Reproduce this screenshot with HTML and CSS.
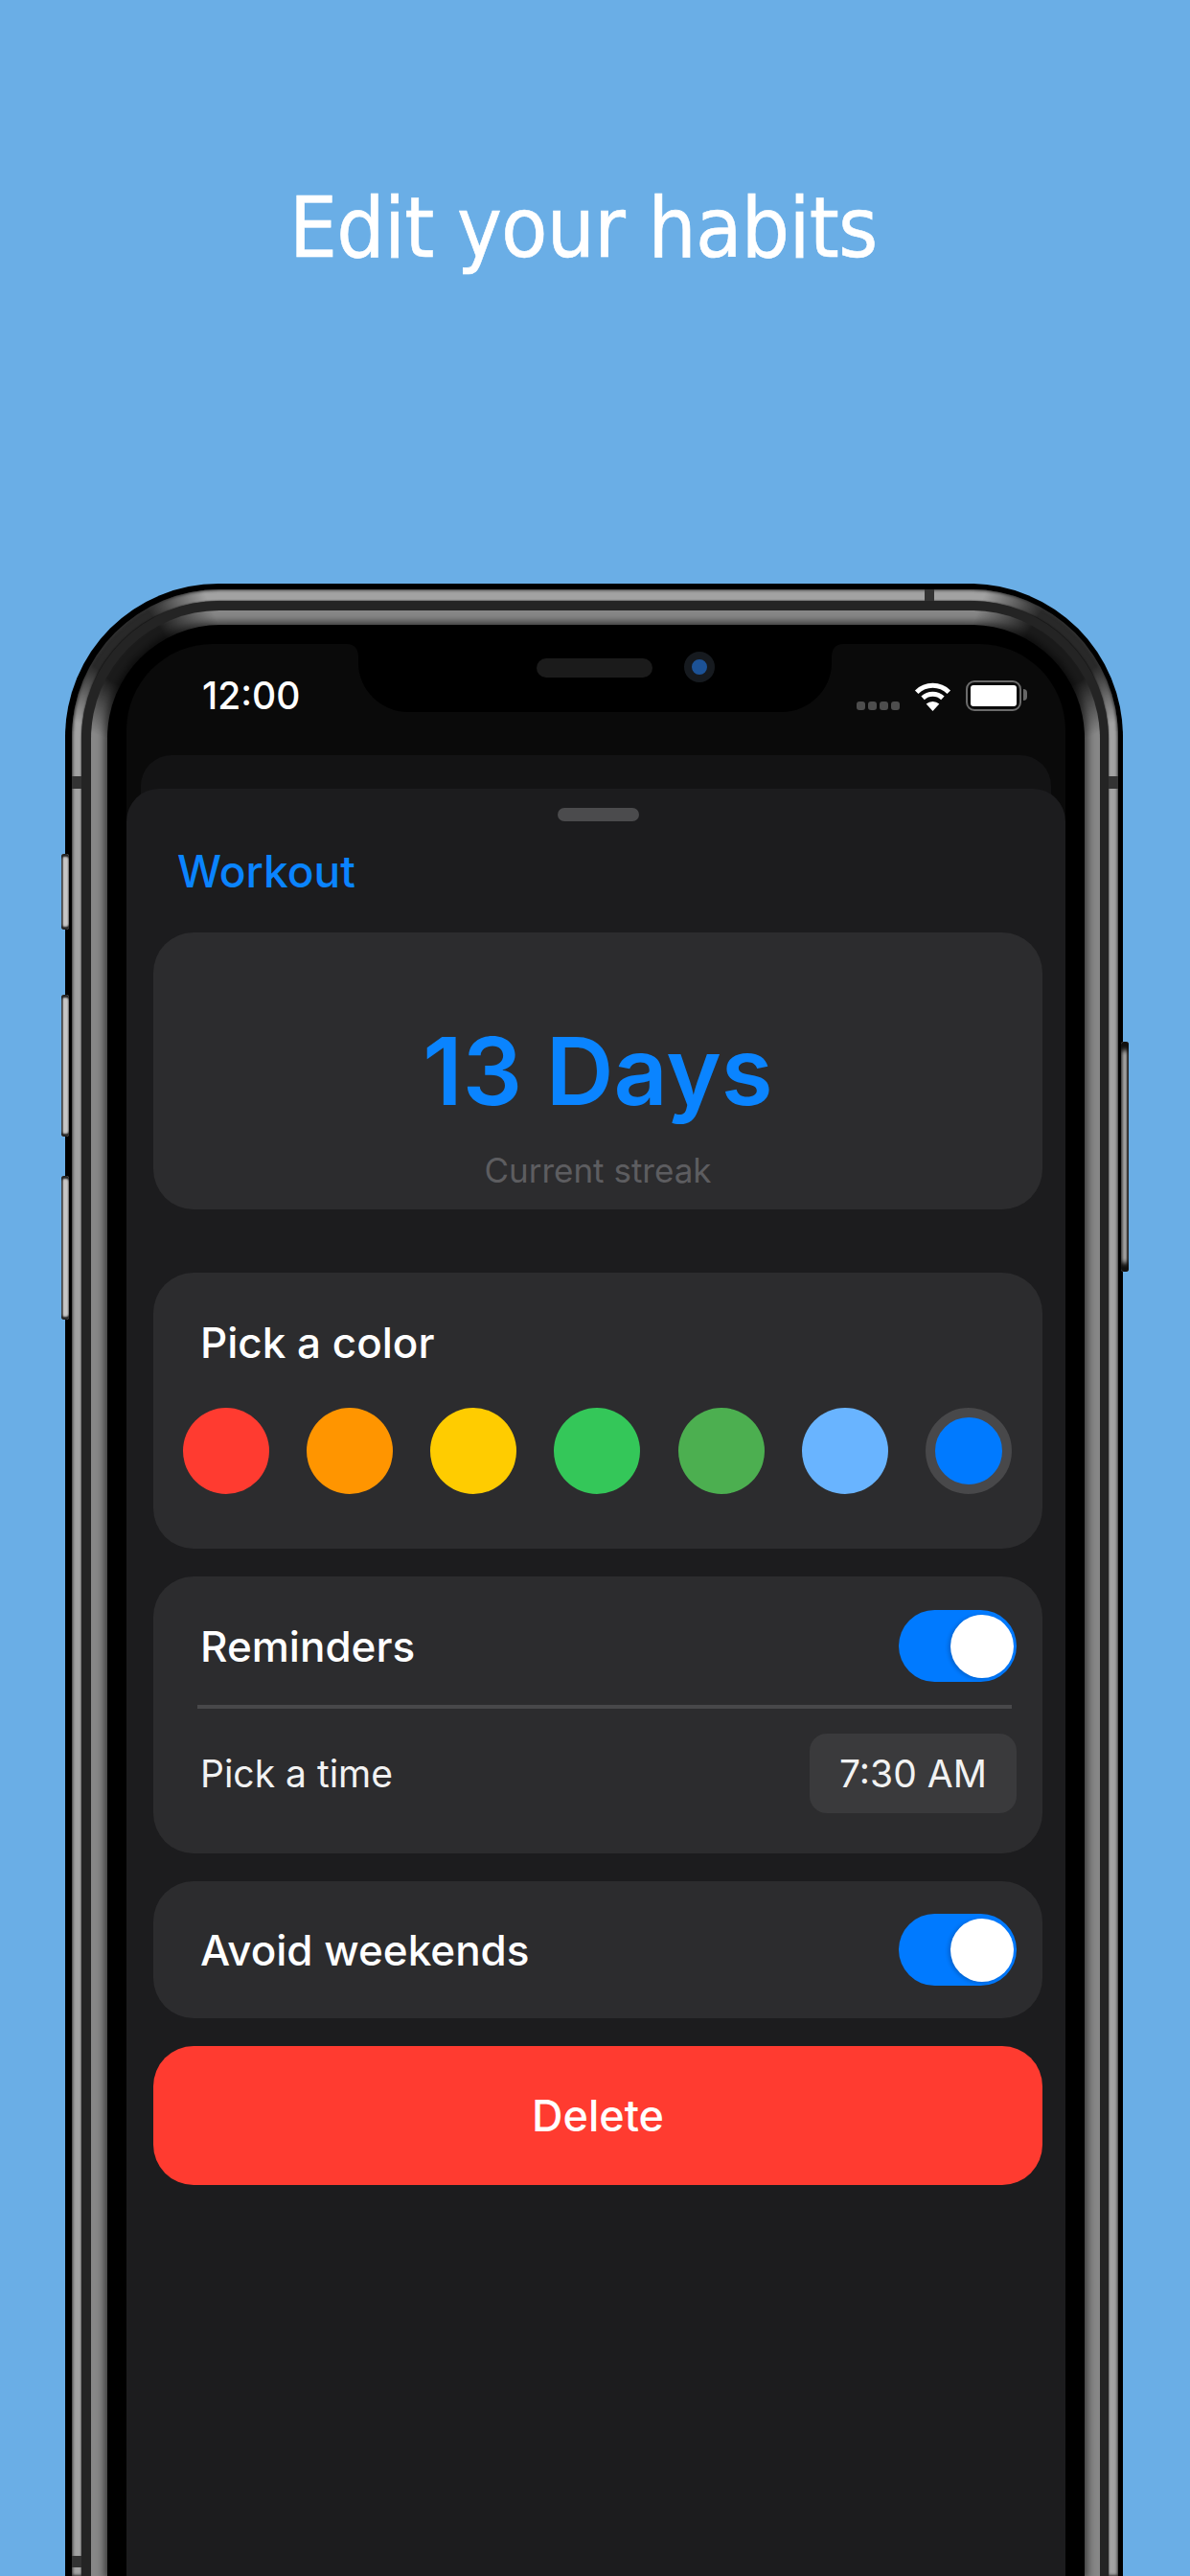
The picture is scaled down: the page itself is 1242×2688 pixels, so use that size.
FILE: index.html
```html
<!DOCTYPE html>
<html lang="en">
<head>
    <meta charset="UTF-8">
    <meta name="viewport" content="width=device-width, initial-scale=1.0">
    <title>Edit your habits</title>

    <link rel="stylesheet" href="styles.css">
</head>
<body>
    <!-- Store headline -->
    <h1 class="headline">Edit your habits</h1>

    <!-- Phone frame, made of nested rings -->
    <div class="phone">
        <span class="sideButton mute"></span>
        <span class="sideButton volUp"></span>
        <span class="sideButton volDown"></span>
        <span class="sideButton power"></span>

        <div class="metal">
            <span class="antenna antennaLeft"></span>
            <span class="antenna antennaRight"></span>
            <span class="antenna antennaTop"></span>
            <span class="antenna antennaLow"></span>

            <div class="gap">
                <div class="bezel">
                    <div class="glass">
                        <div class="screen">
                            <!-- Notch with speaker and camera -->
                            <svg class="notch" viewBox="0 0 518 71" aria-hidden="true">
                                <path d="M0 0H518C510 0 506 5 506 14V20C506 48 482 71 454 71H64C36 71 12 48 12 20V14C12 5 8 0 0 0Z" fill="#000"/>
                            </svg>
                            <span class="speaker"></span>
                            <span class="camera"></span>

                            <!-- Status bar -->
                            <div class="statusBar">
                                <span class="clock">12:00</span>
                                <div class="statusIcons">
                                    <div class="signal"><i></i><i></i><i></i><i></i></div>
                                    <svg class="wifi" viewBox="0 0 40 31" aria-hidden="true">
                                        <path d="M3.2 11.2A24 24 0 0 1 36.8 11.2" fill="none" stroke="#fff" stroke-width="5"/>
                                        <path d="M9.6 17.4A15 15 0 0 1 30.4 17.4" fill="none" stroke="#fff" stroke-width="5"/>
                                        <path d="M20 31L13.2 23.6A10 10 0 0 1 26.8 23.6Z" fill="#fff"/>
                                    </svg>
                                    <div class="battery"><span class="batteryFill"></span></div>
                                </div>
                            </div>

                            <!-- Sheet stack -->
                            <div class="backSheet"></div>
                            <div class="sheet">
                                <div class="handle"></div>
                                <div class="sheetTitle">Workout</div>

                                <div class="card streakCard">
                                    <div class="streakValue">13 Days</div>
                                    <div class="streakLabel">Current streak</div>
                                </div>

                                <div class="card colorCard">
                                    <div class="rowTitle">Pick a color</div>
                                    <div class="swatches">
                                        <span class="swatch red"></span>
                                        <span class="swatch orange"></span>
                                        <span class="swatch yellow"></span>
                                        <span class="swatch green"></span>
                                        <span class="swatch leaf"></span>
                                        <span class="swatch sky"></span>
                                        <span class="swatch blue selected"></span>
                                    </div>
                                </div>

                                <div class="card reminderCard">
                                    <div class="row">
                                        <span class="rowTitle">Reminders</span>
                                        <span class="toggle"><span class="knob"></span></span>
                                    </div>
                                    <div class="divider"></div>
                                    <div class="row">
                                        <span class="rowText">Pick a time</span>
                                        <span class="timePill">7:30 AM</span>
                                    </div>
                                </div>

                                <div class="card weekendCard">
                                    <div class="row">
                                        <span class="rowTitle">Avoid weekends</span>
                                        <span class="toggle"><span class="knob"></span></span>
                                    </div>
                                </div>

                                <div class="deleteButton">Delete</div>
                            </div>
                        </div>
                    </div>
                </div>
            </div>
        </div>
    </div>
</body>
</html>
```

FILE: styles.css
```css
/* General page styling */
html, body {
    height: 2688px;
    overflow: hidden;
}

body {
    margin: 0;
    background-color: #6aaee6;
    font-family: Inter, "Liberation Sans", sans-serif;
    color: white;
}

/* Headline above the phone */
.headline {
    margin: 0;
    height: 609px;
    padding: 186px 0 0 302px;
    box-sizing: border-box;
    font-family: "DejaVu Sans", sans-serif;
    font-stretch: condensed;
    font-size: 88px;
    font-weight: normal;
    line-height: 104px;
    letter-spacing: -0.7px;
    -webkit-text-stroke: 0.6px white;
}

/* Phone frame rings, the phone runs off the bottom of the page */
.phone {
    position: relative;
    width: 1104px;
    height: 2079px;
    margin-left: 68px;
    padding: 6px 5px 0 7px;
    box-sizing: border-box;
    background-color: #000;
    border-radius: 160px 160px 0 0;
}

.metal {
    position: relative;
    height: 100%;
    padding: 12px 10px 0;
    box-sizing: border-box;
    background-color: #a2a2a2;
    border-radius: 154px 154px 0 0;
    /* ring goes dark around the corners */
    background-image:
        radial-gradient(circle 100px at 50px 50px, rgba(0, 0, 0, 0.75) 40%, transparent),
        radial-gradient(circle 100px at calc(100% - 50px) 50px, rgba(0, 0, 0, 0.75) 40%, transparent);
    box-shadow: inset 0 0 3px 1px #333;
}

.gap {
    height: 100%;
    padding: 10px 9px 0 10px;
    box-sizing: border-box;
    background-color: #242424;
    border-radius: 144px 144px 0 0;
    box-shadow: 0 0 2px #000;
}

.bezel {
    height: 100%;
    padding: 15px 16px 0 17px;
    box-sizing: border-box;
    background-color: #878787;
    border-radius: 134px 134px 0 0;
    background-image:
        radial-gradient(circle 95px at 42px 42px, rgba(0, 0, 0, 0.8) 40%, transparent),
        radial-gradient(circle 95px at calc(100% - 42px) 42px, rgba(0, 0, 0, 0.8) 40%, transparent);
}

.glass {
    height: 100%;
    padding: 20px 20px 0;
    box-sizing: border-box;
    background-color: #000;
    border-radius: 118px 118px 0 0;
    box-shadow: 0 0 9px 3px rgba(0, 0, 0, 0.6);
}

.screen {
    position: relative;
    display: flex;
    flex-direction: column;
    height: 100%;
    background-color: #0a0a0a;
    border-radius: 90px 90px 0 0;
    overflow: hidden;
}

/* Buttons on the sides of the phone */
.sideButton {
    position: absolute;
    left: -4px;
    width: 8px;
    background-color: #c6c6c6;
    border-radius: 3px;
    box-shadow: inset 0 3px 2px #222, inset 0 -3px 2px #222, inset 2px 0 1px #666;
}

.mute { top: 282px; height: 79px; }
.volUp { top: 429px; height: 148px; }
.volDown { top: 618px; height: 150px; }

.power {
    left: auto;
    right: -6px;
    top: 478px;
    height: 240px;
    box-shadow: inset 0 9px 5px #111, inset 0 -9px 5px #111, inset -2px 0 1px #666;
}

/* Antenna breaks in the metal ring */
.antenna {
    position: absolute;
    background-color: #333;
}

.antennaLeft { left: 0; top: 195px; width: 10px; height: 13px; }
.antennaRight { right: 0; top: 195px; width: 10px; height: 13px; }
.antennaLow { left: 0; top: 2052px; width: 10px; height: 12px; }
.antennaTop { left: 890px; top: 0; width: 10px; height: 12px; }

/* Notch */
.notch {
    position: absolute;
    left: 230px;
    top: 0;
    width: 518px;
    height: 71px;
}

.speaker {
    position: absolute;
    left: 428px;
    top: 15px;
    width: 121px;
    height: 20px;
    background-color: #1b1b1b;
    border-radius: 10px;
}

.camera {
    position: absolute;
    left: 582px;
    top: 8px;
    width: 16px;
    height: 16px;
    border: 8px solid #161a1f;
    background-color: #1c5296;
    border-radius: 50%;
}

/* Status bar */
.statusBar {
    position: relative;
    display: flex;
    justify-content: space-between;
    align-items: center;
    flex: none;
    height: 116px;
    padding: 0 46px 8px 79px;
    box-sizing: border-box;
}

.clock {
    font-size: 39px;
    font-weight: 500;
    line-height: 46px;
}

.statusIcons {
    display: flex;
    align-items: flex-end;
    gap: 14px;
}

.signal {
    display: flex;
    gap: 3px;
    margin-bottom: 1px;
}

.signal i {
    width: 9px;
    height: 9px;
    background-color: #4d4d4d;
    border-radius: 3px;
}

.wifi {
    width: 41px;
    height: 31px;
}

.battery {
    position: relative;
    width: 58px;
    height: 32px;
    padding: 3px;
    box-sizing: border-box;
    border: 2px solid #6b6b6b;
    border-radius: 9px;
}

.battery::after {
    content: "";
    position: absolute;
    right: -8px;
    top: 7px;
    width: 4px;
    height: 12px;
    background-color: #666;
    border-radius: 0 4px 4px 0;
}

.batteryFill {
    display: block;
    height: 100%;
    background-color: white;
    border-radius: 3px;
}

/* Sheets */
.backSheet {
    flex: none;
    height: 60px;
    margin: 0 15px;
    background-color: #131314;
    border-radius: 32px 32px 0 0;
}

.sheet {
    position: relative;
    flex: 1;
    margin-top: -25px;
    padding: 20px 24px 0 28px;
    box-sizing: border-box;
    background-color: #1c1c1e;
    border-radius: 34px 34px 0 0;
}

.handle {
    width: 85px;
    height: 14px;
    margin: 0 auto;
    background-color: #4b4b4d;
    border-radius: 7px;
}

.sheetTitle {
    margin: 24px 0 0 25px;
    height: 92px;
    font-size: 46px;
    font-weight: 500;
    line-height: 56px;
    color: #0a84ff;
}

/* Cards */
.card {
    margin-bottom: 29px;
    background-color: #2c2c2e;
    border-radius: 42px;
}

.streakCard {
    height: 289px;
    margin-bottom: 66px;
    padding-top: 87px;
    box-sizing: border-box;
    text-align: center;
}

.streakValue {
    font-size: 98px;
    font-weight: 600;
    line-height: 116px;
    color: #0a84ff;
}

.streakLabel {
    margin-top: 24px;
    font-size: 35px;
    line-height: 42px;
    color: #5d5d60;
}

.colorCard {
    height: 288px;
    padding: 47px 32px 0 31px;
    box-sizing: border-box;
}

.colorCard .rowTitle {
    display: block;
    margin-left: 18px;
}

.rowTitle {
    font-size: 44px;
    font-weight: 500;
    line-height: 52px;
}

.rowText {
    font-size: 39px;
    line-height: 48px;
    color: #f2f2f2;
}

/* Colour swatches */
.swatches {
    display: flex;
    justify-content: space-between;
    margin-top: 42px;
}

.swatch {
    width: 90px;
    height: 90px;
    box-sizing: border-box;
    border-radius: 50%;
}

.red { background-color: #ff3b30; }
.orange { background-color: #ff9500; }
.yellow { background-color: #ffcc00; }
.green { background-color: #34c759; }
.leaf { background-color: #4caf50; }
.sky { background-color: #69b4ff; }
.blue { background-color: #007aff; }

.selected {
    border: 10px solid #48484a;
}

/* Rows with a control on the right */
.reminderCard {
    height: 289px;
    padding: 35px 27px 0 49px;
    box-sizing: border-box;
}

.weekendCard {
    height: 143px;
    padding: 34px 27px 0 49px;
    box-sizing: border-box;
}

.row {
    display: flex;
    justify-content: space-between;
    align-items: center;
}

.toggle {
    display: flex;
    justify-content: flex-end;
    align-items: center;
    width: 123px;
    height: 75px;
    padding-right: 3px;
    box-sizing: border-box;
    background-color: #007aff;
    border-radius: 38px;
}

.knob {
    width: 66px;
    height: 66px;
    background-color: white;
    border-radius: 50%;
    box-shadow: -2px 1px 4px rgba(0, 0, 0, 0.2);
}

.divider {
    height: 4px;
    margin: 24px 5px 26px -3px;
    background-color: #48484a;
}

.timePill {
    display: flex;
    align-items: center;
    justify-content: center;
    width: 216px;
    height: 83px;
    background-color: #3a3a3c;
    border-radius: 18px;
    font-size: 39px;
    color: #f2f2f2;
}

/* Delete button */
.deleteButton {
    height: 145px;
    background-color: #ff3b30;
    border-radius: 42px;
    font-size: 45px;
    font-weight: 500;
    line-height: 145px;
    text-align: center;
}
```
